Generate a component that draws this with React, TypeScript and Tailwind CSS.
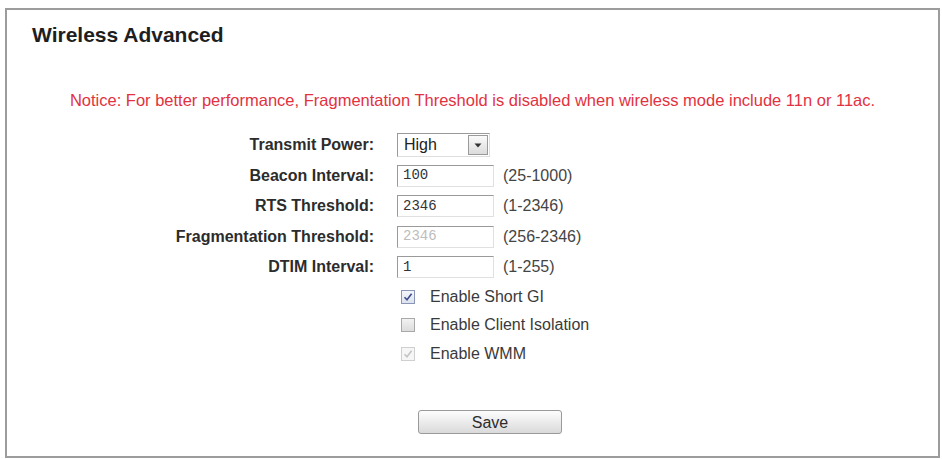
import React from 'react';

type Field = {
  label: string;
  value: string;
  range: string;
  disabled?: boolean;
};

const fields: Field[] = [
  { label: 'Beacon Interval:', value: '100', range: '(25-1000)' },
  { label: 'RTS Threshold:', value: '2346', range: '(1-2346)' },
  { label: 'Fragmentation Threshold:', value: '2346', range: '(256-2346)', disabled: true },
  { label: 'DTIM Interval:', value: '1', range: '(1-255)' },
];

const options = [
  { label: 'Enable Short GI', checked: true },
  { label: 'Enable Client Isolation', checked: false },
  { label: 'Enable WMM', checked: true, disabled: true },
];

const Check = ({ checked, disabled }: { checked: boolean; disabled?: boolean }) => (
  <span
    className={
      'flex items-center justify-center w-[14px] h-[14px] border ' +
      (disabled
        ? 'border-[#cfcfcf] bg-[#f6f6f6]'
        : checked
          ? 'border-[#8a95b8] bg-gradient-to-b from-[#f4f6fb] to-[#dde2ee]'
          : 'border-[#a9a9a9] bg-gradient-to-b from-[#f2f2f2] to-[#dcdcdc]')
    }
  >
    {checked && (
      <svg width="10" height="10" viewBox="0 0 10 10">
        <path
          d="M1.5 5.2 L4 7.8 L8.6 1.8"
          fill="none"
          stroke={disabled ? '#c4c4c4' : '#3c4f8c'}
          strokeWidth="1.6"
        />
      </svg>
    )}
  </span>
);

export default function App() {
  return (
    <div className="w-[942px] h-[459px] bg-white pt-[8px] pl-[5px] font-['Liberation_Sans',Arial,sans-serif]">
      <div className="w-[935px] h-[450px] border-2 border-[#9c9c9c] flex flex-col">
        {/* Header */}
        <h1 className="pl-[25px] pt-[13px] text-[21px] leading-[24px] font-bold text-[#1e1e1e]">
          Wireless Advanced
        </h1>

        <p className="mt-[43px] text-center text-[16.5px] leading-[20px] text-[#e2323f]">
          Notice: For better performance, Fragmentation Threshold is disabled when wireless mode include 11n or 11ac.
        </p>

        {/* Settings form */}
        <div className="mt-[20px] flex flex-col">
          <div className="flex items-center h-[30.5px]">
            <label className="w-[367px] text-right text-[16px] font-bold text-[#2c2c2c]">Transmit Power:</label>
            <div className="ml-[23px] flex items-center w-[93px] h-[24px] border border-t-[#9a9a9a] border-l-[#9a9a9a] border-r-[#dedede] border-b-[#dedede] bg-white">
              <span className="flex-1 pl-[6px] text-[16px] text-[#222]">High</span>
              <span className="mr-[1px] flex items-center justify-center w-[20px] h-[20px] border border-[#9a9a9a] bg-gradient-to-b from-[#fafafa] to-[#dcdcdc]">
                <svg width="8" height="5" viewBox="0 0 8 5">
                  <path d="M0.5 0.5 H7.5 L4 4.5 Z" fill="#333" />
                </svg>
              </span>
            </div>
          </div>

          {fields.map((f) => (
            <div key={f.label} className="flex items-center h-[30.5px]">
              <label className="w-[367px] text-right text-[16px] font-bold text-[#2c2c2c]">{f.label}</label>
              <div className="ml-[23px] flex items-center w-[97px] h-[22px] border border-t-[#9a9a9a] border-l-[#9a9a9a] border-r-[#e0e0e0] border-b-[#e0e0e0] bg-white">
                <span
                  className={
                    "pl-[5px] font-['Liberation_Mono',monospace] text-[14px] " +
                    (f.disabled ? 'text-[#bdbdbd]' : 'text-[#333]')
                  }
                >
                  {f.value}
                </span>
              </div>
              <span className="ml-[9px] text-[16px] text-[#444]">{f.range}</span>
            </div>
          ))}

          <div className="flex flex-col">
            {options.map((o) => (
              <div key={o.label} className="flex items-center h-[28.5px] pl-[394px]">
                <Check checked={o.checked} disabled={o.disabled} />
                <span className="ml-[15px] text-[16px] text-[#3a3a3a]">{o.label}</span>
              </div>
            ))}
          </div>
        </div>

        <div className="mt-[42px] pl-[411px]">
          <button className="w-[144px] h-[24px] rounded-[3px] border border-[#9a9a9a] bg-gradient-to-b from-[#fdfdfd] to-[#dadada] text-[16px] text-[#2c2c2c]">
            Save
          </button>
        </div>
      </div>
    </div>
  );
}
